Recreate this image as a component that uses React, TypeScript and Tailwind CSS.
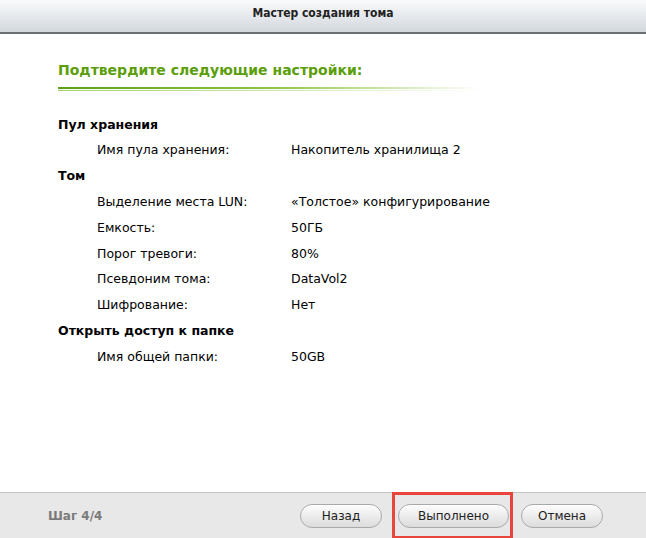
import React from "react";

type Row = { label: string; value: string };
type Section = { title: string; rows: Row[] };

const sections: Section[] = [
  {
    title: "Пул хранения",
    rows: [{ label: "Имя пула хранения:", value: "Накопитель хранилища 2" }],
  },
  {
    title: "Том",
    rows: [
      { label: "Выделение места LUN:", value: "«Толстое» конфигурирование" },
      { label: "Емкость:", value: "50ГБ" },
      { label: "Порог тревоги:", value: "80%" },
      { label: "Псевдоним тома:", value: "DataVol2" },
      { label: "Шифрование:", value: "Нет" },
    ],
  },
  {
    title: "Открыть доступ к папке",
    rows: [{ label: "Имя общей папки:", value: "50GB" }],
  },
];

const font = "font-['DejaVu_Sans','Verdana',sans-serif]";

const PillButton = ({ label, width }: { label: string; width: string }) => (
  <button
    className={`${width} h-[24px] rounded-full border border-[#a9a9a9] bg-gradient-to-b from-[#fdfdfd] to-[#dcdcdc] text-[12px] text-[#222] shadow-[inset_0_1px_0_#fff]`}
  >
    {label}
  </button>
);

export default function App() {
  return (
    <div className={`flex h-[538px] w-[646px] flex-col bg-white ${font}`}>
      <div className="flex h-[34px] shrink-0 justify-center border-b-2 border-[#6c6f74] bg-gradient-to-b from-[#f9fafb] to-[#d3d8de] pt-[4px]">
        <span className="font-['DejaVu_Sans_Condensed','DejaVu_Sans',sans-serif] text-[12px] font-bold text-[#222]">
          Мастер создания тома
        </span>
      </div>

      <div className="flex flex-1 flex-col pl-[58px]">
        <div className="pt-[26px] text-[14px] font-bold leading-[20px] text-[#5a9e0a]">
          Подтвердите следующие настройки:
        </div>
        <div className="mt-[7px] w-[422px]">
          <div className="h-[2px] bg-gradient-to-r from-[#5aa310] via-[#8cc63f] to-transparent" />
          <div className="mt-[1px] h-[1px] bg-gradient-to-r from-[#a6d36a] via-[#cbe6a6] to-transparent" />
        </div>

        <div className="mt-[21px] flex flex-col text-[12.5px] text-black">
          {sections.map((s) => (
            <div key={s.title} className="flex flex-col">
              <div className="flex h-[25.8px] items-center font-bold">{s.title}</div>
              {s.rows.map((r) => (
                <div key={r.label} className="flex h-[25.8px] items-center">
                  <span className="w-[233px] pl-[39px]">{r.label}</span>
                  <span>{r.value}</span>
                </div>
              ))}
            </div>
          ))}
        </div>
      </div>

      <div className="flex h-[46px] shrink-0 items-center border-t border-[#c4c4c4] bg-[#e8e8e8] pl-[48px] pr-[43px]">
        <span className="text-[12px] font-bold text-[#7a7a7a]">Шаг 4/4</span>
        <div className="ml-auto flex items-center">
          <PillButton label="Назад" width="w-[82px]" />
          <div className="ml-[10px] border-[3px] border-[#e8453c] py-[8px] pl-[3px] pr-[1px]">
            <PillButton label="Выполнено" width="w-[111px]" />
          </div>
          <div className="ml-[8px]">
            <PillButton label="Отмена" width="w-[82px]" />
          </div>
        </div>
      </div>
    </div>
  );
}
